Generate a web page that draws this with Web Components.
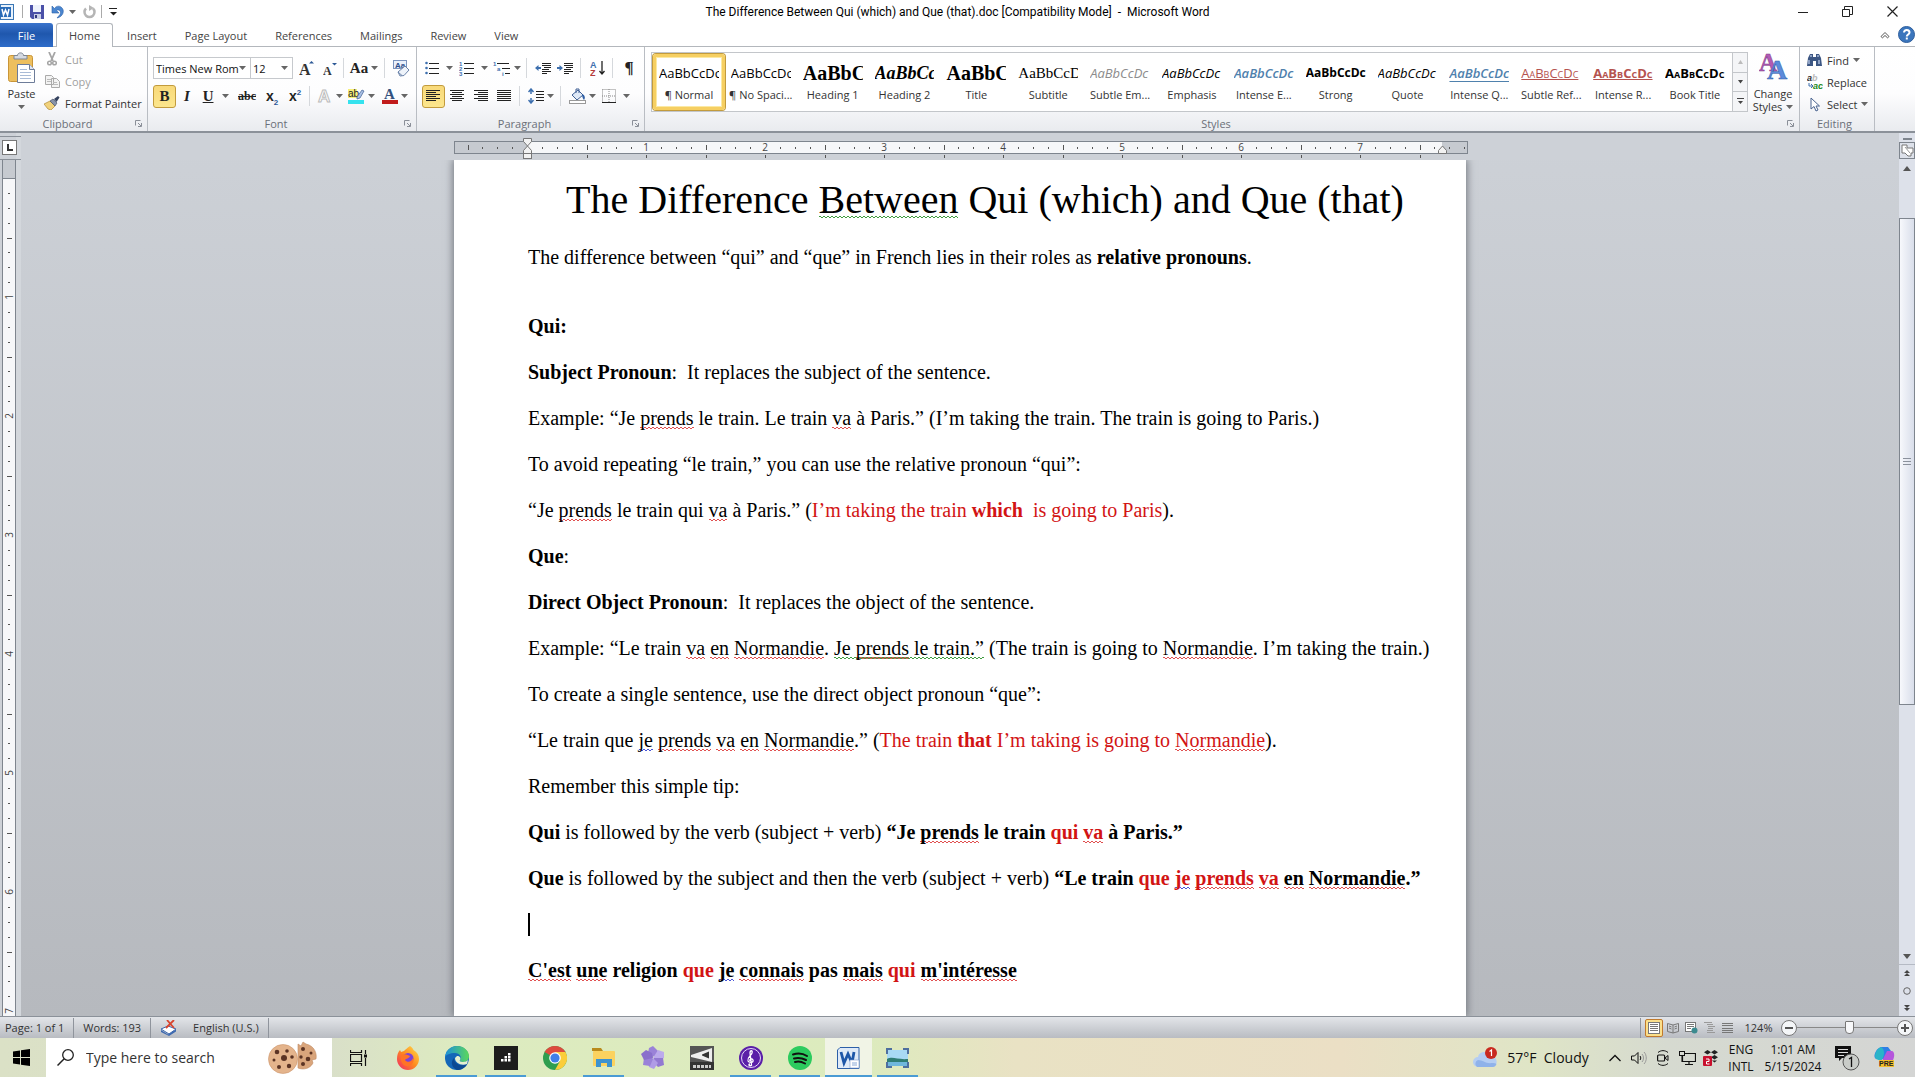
<!DOCTYPE html>
<html lang="en">
<head>
<meta charset="utf-8">
<title>The Difference Between Qui (which) and Que (that).doc - Microsoft Word</title>
<style>
html,body{margin:0;height:100%}
body{font-family:"Open Sans","Noto Sans",sans-serif;font-size:11px;color:#333;overflow:hidden}
</style>
</head>
<body>
<word-app></word-app>
<script>
const BASE = `
*{box-sizing:border-box}
button,select,input{font:inherit;color:inherit;border:0;background:none;padding:0;margin:0}
button{display:flex;align-items:center;justify-content:center;gap:3px;white-space:nowrap}
svg{display:block;flex:none}
`;
function define(name, css, html) {
  customElements.define(name, class extends HTMLElement {
    constructor() {
      super();
      this.attachShadow({mode: 'open'});
    }
    connectedCallback() {
      const t = document.createElement('template');
      t.innerHTML = `<style>${BASE}${css}</style>` + (typeof html === 'function' ? html(this) : html);
      this.shadowRoot.replaceChildren(t.content.cloneNode(true));
    }
  });
}
const svg = (w, h, body, vb) => `<svg width="${w}" height="${h}" viewBox="${vb || `0 0 ${w} ${h}`}" aria-hidden="true">${body}</svg>`;
const ARROW = svg(7, 4, '<path d="M0 0h7L3.500 4z" fill="#666"/>');
const lines = (list, x = 0, c = '#222') => list.map(([a, b, y]) => `<path d="M${a + x} ${y}.5H${b + x}" stroke="${c}"/>`).join('');

const I = {
  word: svg(15, 16, '<rect x=".5" y=".5" width="13" height="15" fill="#e9f2fb" stroke="#3b77b5"/><rect x="0" y="3" width="11" height="10" fill="#2a6cb8"/><path d="M2 5l1.500 6L5.500 6l2 5L9 5" fill="none" stroke="#fff" stroke-width="1.500"/>'),
  save: svg(14, 14, '<path d="M0 0h14v14H2L0 12z" fill="#4b51a8"/><rect x="3" y="0" width="8" height="7" fill="#eef2fb"/><rect x="4" y="9" width="7" height="5" fill="#c9cfe6"/><rect x="5" y="10" width="2" height="3" fill="#33387f"/>'),
  undo: svg(13, 14, '<path d="M1 1v7h7L5.500 5.500C8 4 10.500 6 9 9.500L6 13c6-1 8.500-8 4-11C8 .5 5 1 3.500 3.500z" fill="#4a86d0" stroke="#2e62a8" stroke-width=".6"/>'),
  redo: svg(13, 14, '<path d="M3 3.500a5 5 0 1 0 7 0" fill="none" stroke="#b5b5b5" stroke-width="2.500"/><path d="M6 0v6l5-3z" fill="#b5b5b5"/>'),
  custom: svg(8, 8, '<path d="M0 .5h8" stroke="#222"/><path d="M1 4h7L4.500 7.500z" fill="#222"/>'),
  min: svg(10, 10, '<path d="M0 5.500h10" stroke="#222"/>'),
  restore: svg(11, 11, '<path d="M.5 3.500h7v7h-7zM2.500 3.500v-3h8v8h-3" fill="none" stroke="#222"/>'),
  close: svg(11, 11, '<path d="M.5.5l10 10M10.500.5l-10 10" stroke="#222" stroke-width="1.200"/>'),
  collapse: svg(10, 8, '<path d="M1 5.500L5 1.500l4 4-1.500 1.300L5 4.500 2.500 6.800z" fill="#fff" stroke="#555"/>'),
  help: svg(17, 17, '<circle cx="8.500" cy="8.500" r="8" fill="#3b76bd" stroke="#2f5f9d"/><path d="M6 6.500c0-3.500 5.500-3 5.500 0 0 2-2.700 2-2.700 4" fill="none" stroke="#fff" stroke-width="2"/><rect x="7.800" y="11.500" width="2" height="2" fill="#fff"/>'),
  paste: svg(27, 31, '<rect x=".5" y="3.500" width="24" height="26" rx="2" fill="#edbf5e" stroke="#c99538"/><path d="M6 7V3.500h3.500C9.500 0 15.500 0 15.500 3.500H19V7z" fill="#d5dae2" stroke="#7d8694"/><path d="M9.500 12.500h12l5 5v13h-17z" fill="#fff" stroke="#6d7c99"/><path d="M21.500 12.500v5h5" fill="#dfe6f3" stroke="#6d7c99"/><path d="M12 17.500h7M12 20.500h11M12 23.500h11M12 26.500h11" stroke="#a9bbd6"/>'),
  cut: svg(10, 14, '<path d="M2 0l4 9M8 0L4 9" stroke="#a5a5a5" stroke-width="1.800" fill="none"/><circle cx="2.500" cy="11" r="1.800" fill="none" stroke="#a5a5a5" stroke-width="1.500"/><circle cx="7.500" cy="11" r="1.800" fill="none" stroke="#a5a5a5" stroke-width="1.500"/>'),
  copy: svg(15, 13, '<path d="M.5.5h6l2 2v7h-8zM6.500 3.500h5l3 3v6h-8z" fill="#f3f3f3" stroke="#aaa"/><path d="M2 4.500h4M2 6.500h4M8 7.500h4M8 9.500h5" stroke="#bbb"/>'),
  painter: svg(16, 14, '<path d="M0 8l6-3 5 5-4 4-3-1z" fill="#f1d27c" stroke="#b08a35" stroke-width=".7"/><path d="M6 5l3-2 4 4-2 3z" fill="#8793a8" stroke="#4c5568" stroke-width=".7"/><path d="M10 3l4-3 1.500 1.500L12.500 6z" fill="#33415e"/>'),
  launcher: svg(7, 7, '<path d="M.5 5.500v-5h5" fill="none" stroke="#8a8f98"/><path d="M3 3l3 3M6.500 3v3.500H3" stroke="#8a8f98" fill="none"/>'),
  grow: svg(15, 17, '<text x="0" y="15" font-family="Liberation Serif" font-weight="700" font-size="16" fill="#333">A</text><path d="M10 3.500h5L12.500 1z" fill="#2c5896"/>'),
  shrink: svg(14, 17, '<text x="0" y="15" font-family="Liberation Serif" font-weight="700" font-size="12" fill="#333">A</text><path d="M9 3h5l-2.500 2.500z" fill="#2c5896"/>'),
  clear: svg(17, 17, '<rect x=".5" y=".5" width="13" height="8" fill="#eaf1fb" stroke="#7b93bd"/><text x="2" y="8" font-size="8" font-weight="700" font-family="Liberation Sans" fill="#2b4f8c">Aa</text><path d="M5 12l7-6 4 4-5 5.500-4 .5z" fill="#eef3fa" stroke="#6b83aa"/><path d="M5 12l4 3.500" stroke="#6b83aa"/>'),
  glow: svg(16, 16, '<text x="1" y="14" font-family="Liberation Sans" font-weight="700" font-size="17" fill="#fff" stroke="#bbb">A</text>'),
  hl: svg(18, 17, '<rect x="1" y="1" width="9" height="9" fill="#f6f07a"/><text x="1" y="9" font-size="10" font-family="Liberation Sans" fill="#222">ab</text><path d="M10 9l5-7 2 1-4 7-3 1z" fill="#a8bfe3" stroke="#3f5f94" stroke-width=".7"/><rect x="1" y="12" width="16" height="4" fill="#35e2ee"/>'),
  color: svg(16, 17, '<text x="2" y="11" font-size="15" font-weight="700" font-family="Liberation Serif" fill="#32527f">A</text><rect x="0" y="12" width="16" height="4" fill="#c11b1b"/>'),
  bullets: svg(14, 14, '<g fill="#3d6fae"><circle cx="1.500" cy="2" r="1.300"/><circle cx="1.500" cy="7" r="1.300"/><circle cx="1.500" cy="12" r="1.300"/></g>' + lines([[4, 14, 2], [4, 14, 7], [4, 14, 12]])),
  numbers: svg(15, 15, '<g fill="#3d6fae" font-size="6" font-weight="700" font-family="Liberation Sans"><text x="0" y="5">1</text><text x="0" y="10">2</text><text x="0" y="15">3</text></g>' + lines([[5, 15, 2], [5, 15, 7], [5, 15, 12]])),
  multi: svg(18, 15, '<g fill="#3d6fae" font-size="6" font-weight="700" font-family="Liberation Sans"><text x="0" y="5">1</text><text x="4" y="10">a</text><text x="9" y="15">i</text></g>' + lines([[4, 16, 2], [9, 17, 7], [12, 17, 12]])),
  dedent: svg(16, 13, lines([[7, 16, 1], [7, 16, 3], [9, 16, 5], [7, 14, 7], [7, 16, 9], [7, 12, 11]]) + '<path d="M0 6l3.500-3v2H6v2H3.500v2z" fill="#3d6fae"/>'),
  indent: svg(16, 13, lines([[7, 16, 1], [7, 16, 3], [9, 16, 5], [7, 14, 7], [7, 16, 9], [7, 12, 11]]) + '<path d="M6 6L2.500 3v2H0v2h2.500v2z" fill="#3d6fae"/>'),
  sort: svg(15, 16, '<text x="0" y="7.500" font-size="9" font-weight="700" font-family="Liberation Sans" fill="#3d6fae">A</text><text x="0" y="15.500" font-size="9" font-weight="700" font-family="Liberation Sans" fill="#b53a3a">Z</text><path d="M12 1v13M9.500 11l2.500 3 2.500-3" fill="none" stroke="#222" stroke-width="1.300"/>'),
  left: svg(15, 12, lines([[0, 14, 0], [0, 10, 2], [0, 14, 4], [0, 10, 6], [0, 14, 8], [0, 10, 10]])),
  center: svg(15, 12, lines([[0, 14, 0], [2, 12, 2], [0, 14, 4], [2, 12, 6], [0, 14, 8], [2, 12, 10]])),
  right: svg(15, 12, lines([[0, 14, 0], [4, 14, 2], [0, 14, 4], [4, 14, 6], [0, 14, 8], [4, 14, 10]])),
  just: svg(15, 12, lines([[0, 14, 0], [0, 14, 2], [0, 14, 4], [0, 14, 6], [0, 14, 8], [0, 14, 10]])),
  spacing: svg(16, 16, '<path d="M3 1v5M3 10v5M.5 4L3 1l2.500 3M.5 12L3 15l2.500-3" fill="none" stroke="#3d6fae" stroke-width="1.500"/>' + lines([[8, 16, 3], [8, 16, 6], [8, 16, 9], [8, 16, 12]])),
  shade: svg(17, 16, '<path d="M3 7l6-5 5 5-6 5z" fill="#dfe9f7" stroke="#3f5f94"/><path d="M7 5V1h3v4" fill="none" stroke="#3f5f94"/><path d="M13 6c3 1 3.500 4 2 6-1-1-2-3-2-6z" fill="#2e5ea5"/><rect x=".5" y="12.500" width="16" height="3" fill="#fff" stroke="#999"/>'),
  borders: svg(14, 14, '<path d="M.5.5h13v13M.5.5v13M7 0v14M0 7h14" fill="none" stroke="#888" stroke-dasharray="1 1"/><path d="M0 13.500h14" stroke="#222"/>'),
  styles: svg(29, 28, '<text x="0" y="19" font-family="Liberation Serif" font-weight="700" font-size="25" fill="#b25ab4" stroke="#7d3a86" stroke-width=".5">A</text><text x="8" y="27" font-family="Liberation Serif" font-weight="700" font-size="28" fill="#5b8bdc" stroke="#2f5aa6" stroke-width=".5">A</text>'),
  find: svg(15, 14, '<path d="M1 5l2-4h3v3h3V1h3l2 4 1 8H9V8H6v5H0z" fill="#3c5683"/><path d="M2 7v4M12 7v4M4 2v2M11 2v2" stroke="#b7c8e6" stroke-width="1.300"/>'),
  replace: svg(16, 16, '<g font-family="Liberation Sans" font-weight="700" font-size="9"><text x="0" y="7" fill="#333">a</text><text x="5" y="7" fill="#bbb">b</text><text x="6" y="15" fill="#238b23">ac</text></g><path d="M2 9v3h4M4 10l2 2-2 2" fill="none" stroke="#3d6fae"/>'),
  select: svg(10, 15, '<path d="M1 1v11l3-2.500L6 14l2-1-2-4h3.500z" fill="#fff" stroke="#4a6490"/>'),
  proof: svg(17, 16, '<path d="M1 9l7-3 8 3-7 5z" fill="#fff" stroke="#3c69b0"/><path d="M1 10l7 4.500 8-5v2L9 16l-8-4z" fill="#3c69b0"/><path d="M7 0l7 8M14 0L6 8" stroke="#d8442e" stroke-width="1.800"/>'),
  v1: svg(12, 12, '<rect x=".5" y=".5" width="11" height="11" fill="#fff" stroke="#777"/>' + lines([[2, 10, 2], [2, 10, 4], [2, 10, 6], [2, 10, 8]], 0, '#777')),
  v2: svg(12, 12, '<path d="M.5 1.500L6 3l5.500-1.500v8L6 11 .5 9.500zM6 3v8M2 4l2.500 1M2 6l2.500 1M10 4L7.500 5M10 6L7.500 7" fill="none" stroke="#777"/>'),
  v3: svg(13, 12, '<rect x=".5" y=".5" width="10" height="9" fill="#fff" stroke="#777"/>' + lines([[2, 9, 2], [2, 9, 4], [2, 6, 6]], 0, '#777') + '<circle cx="9.500" cy="8.500" r="3" fill="#3c8a8f"/>'),
  v4: svg(11, 12, lines([[0, 8, 0], [3, 9, 2], [4, 11, 4], [4, 9, 6], [3, 9, 8], [3, 11, 10]], 0, '#999')),
  v5: svg(11, 12, lines([[0, 11, 1], [0, 11, 3], [0, 11, 6], [0, 11, 8], [0, 11, 10]], 0, '#777')),
  minus: svg(16, 16, '<circle cx="8" cy="8" r="7.500" fill="#f4f6f8" stroke="#777"/><path d="M4 8h8" stroke="#555" stroke-width="2"/>'),
  plus: svg(16, 16, '<circle cx="8" cy="8" r="7.500" fill="#f4f6f8" stroke="#777"/><path d="M4 8h8M8 4v8" stroke="#555" stroke-width="2"/>'),
  win: svg(17, 17, '<path d="M0 2.500l7-1V8H0zM8 1.300L17 0v8H8zM0 9h7v6.500l-7-1zM8 9h9v8l-9-1.300z" fill="#000"/>'),
  search: svg(17, 17, '<circle cx="11" cy="6" r="5.300" fill="none" stroke="#222" stroke-width="1.300"/><path d="M7.200 9.800L.5 16.500" stroke="#222" stroke-width="1.500"/>'),
  cookie: svg(50, 33, '<path d="M30 3l3 2 2-4 3 2c9 2 11 10 10 15l-4 1 1 3c-3 6-10 7-15 5z" fill="#d9a57c" stroke="#c18a61" stroke-width=".6"/><circle cx="15" cy="18" r="14.500" fill="#e4b48c" stroke="#cc966c" stroke-width=".6"/><g fill="#5b3324"><circle cx="9" cy="11" r="2.300"/><circle cx="19" cy="10" r="1.800"/><circle cx="16" cy="17" r="3"/><circle cx="24" cy="16" r="1.800"/><circle cx="6" cy="19" r="1.500"/><circle cx="11" cy="26" r="2"/><circle cx="21" cy="25" r="2.200"/><circle cx="35" cy="8" r="2"/><circle cx="33" cy="16" r="1.700"/><circle cx="40" cy="18" r="2.300"/><circle cx="43" cy="12" r="1.500"/><circle cx="35" cy="23" r="2"/></g>'),
  taskview: svg(18, 16, '<path d="M.5 0v2.500h11V0M.5 16v-2.500h11V16M.5 4.500h11v7H.5zM15.500 0v4M15.500 8v8" fill="none" stroke="#111" stroke-width="1.200"/><rect x="14" y="4.500" width="3" height="3" fill="#111"/>'),
  firefox: svg(24, 24, '<defs><linearGradient id="f" x1="1" y1="0" x2="0" y2="1"><stop offset="0" stop-color="#ffe14d"/><stop offset=".5" stop-color="#ff8a1f"/><stop offset="1" stop-color="#f0246c"/></linearGradient></defs><path d="M14 0c2 1 3 3 3.500 4C21 6 23 9 23 13a11 11 0 0 1-22 0c0-4 1-7 3-9l1 2 3-1c1-1 3-3 6-5z" fill="url(#f)"/><circle cx="12" cy="12.500" r="5.500" fill="#7d42d8"/><path d="M5 9c4-2 7 0 9 1-1 3-4 2-5 4 2 3 7 2 8-2 2 5-3 9-7 8-4-1-6-6-5-11z" fill="#ff7426"/>'),
  edge: svg(24, 24, '<defs><linearGradient id="e" x1="0" y1="0" x2="1" y2="0"><stop offset="0" stop-color="#1b8fdc"/><stop offset="1" stop-color="#5cd85a"/></linearGradient></defs><circle cx="12" cy="12" r="12" fill="#1467b8"/><path d="M0 11C1 4 6 0 12 0c7 0 12 5 12 10 0 4-3 6-6 6-2 0-4-1-3-2 2-3 0-7-5-7C5 7 1 9 0 11z" fill="url(#e)"/><path d="M9 12c0 5 5 8 10 7l3-1c-2 4-6 6-10 6-5-2-7-8-3-12z" fill="#0c4a93"/><path d="M12 10c3 0 4 2 3 4-1 1 1 2 3 2 2 0 4-1 5-2l-1 4c-6 2-12-1-12-6z" fill="#e5efd0"/>'),
  dark: svg(24, 24, '<rect width="24" height="24" fill="#1d1d1d"/><g fill="#fff"><rect x="7" y="13" width="2.500" height="2.500"/><rect x="10.500" y="13" width="2.500" height="2.500"/><rect x="14" y="13" width="2.500" height="2.500"/><rect x="10.500" y="10" width="2.500" height="2.500"/><rect x="14" y="10" width="2.500" height="2.500"/><rect x="14" y="7" width="2.500" height="2.500"/></g>'),
  chrome: svg(24, 24, '<circle cx="12" cy="12" r="12" fill="#2f9e4f"/><path d="M12 12L1.600 6A12 12 0 0 1 22.400 6z" fill="#dd4b3e"/><path d="M12 6h10.400A12 12 0 0 1 12 24l5-9z" fill="#fbcd3a"/><circle cx="12" cy="12" r="5.800" fill="#fff"/><circle cx="12" cy="12" r="4.600" fill="#3f7fe8"/>'),
  folder: svg(24, 20, '<path d="M0 0h9l2 3H0z" fill="#b98a1c"/><rect x="1" y="3" width="22" height="15" rx="1" fill="#fbd25f"/><path d="M4 19v-8h16v8h-5v-4h-6v4z" fill="#3d93cf"/>'),
  flower: svg(24, 24, '<g fill="#a993e2"><path d="M12 0l5 5-1 4-5 2-4-4 1-5z" fill="#9a82d8"/><path d="M17 4l6 2v6l-5 3-6-3z" fill="#bcaaec"/><path d="M22 12l1 7-6 2-5-5 1-4z" fill="#9279d2"/><path d="M17 17l-4 6-5-2-1-6 5-3z" fill="#b09ce6"/><path d="M9 20l-7-1 1-7 5-2 4 3z" fill="#9a82d8"/><path d="M3 14L0 8l5-4 6 3 1 5z" fill="#8a70cc"/></g>'),
  amp: svg(24, 24, '<rect width="24" height="24" fill="#555"/><rect y="16" width="24" height="8" fill="#333"/><path d="M1 9L22 2v14L1 11z" fill="#ededed"/><path d="M12 8.500l7-3v7l-7-3z" fill="#333"/><path d="M3 20.500h18" stroke="#ccc" stroke-width="3" stroke-dasharray="3 1"/>'),
  music: svg(24, 24, '<circle cx="12" cy="12" r="12" fill="#5a1fa8"/><circle cx="12" cy="12" r="9.500" fill="none" stroke="#e6d8fa"/><path d="M13 19c-3 2-4-1-2-1M12.500 19L11 7c0-3 3-3 2 0s-5 4-4 8c1 2 6 2 5-1-1-2-4-1-3 1" fill="none" stroke="#fff" stroke-width="1.300"/>'),
  spotify: svg(24, 24, '<circle cx="12" cy="12" r="12" fill="#2ccb5e"/><path d="M5 8.500c5-1.500 10-1 14 1.500M6 12.500c4-1 8-.5 12 1.500M7 16c3-1 6.500-.5 10 1.500" fill="none" stroke="#111" stroke-width="2" stroke-linecap="round"/>'),
  wordapp: svg(23, 22, '<path d="M3 .5h19v21H.5V3z" fill="#dfeaf8" stroke="#2d5fa8"/><path d="M4 5l3 11 4-9 4 9 2-11" fill="none" stroke="#1d56a8" stroke-width="2.800"/><path d="M13 13h9v8h-9z" fill="#fff" stroke="#7d9ccc" stroke-width=".6"/><path d="M15 16h5M15 18h5" stroke="#8aa9d6"/>'),
  photo: svg(23, 20, '<rect x="1" y="2" width="21" height="16" fill="#a8d9f4"/><path d="M1 11c6-3 10 1 21 0v7H1z" fill="#2f7d74"/><path d="M1 14h21v4H1z" fill="#6fb7dc"/><path d="M1 6V1h5M17 1h5v5M22 14v5h-5M6 19H1v-5" fill="none" stroke="#4e6f9f" stroke-width="2"/>'),
  cloud: svg(25, 22, '<path d="M5 20a5 5 0 0 1 0-10c1-6 10-7 12-1 8 0 9 10 2 11z" fill="#b4cdf3"/><path d="M4 20a4 4 0 0 1 1-7c5 0 8 4 14 3 4 0 5 1 4 2-1 2-3 2-4 2z" fill="#8fb2ea"/><circle cx="18" cy="6" r="6" fill="#c92a20"/><path d="M16.500 4.500L18.500 3v6" stroke="#fff" fill="none" stroke-width="1.200"/>'),
  chev: svg(12, 8, '<path d="M.5 7L6 1.500 11.500 7" fill="none" stroke="#111" stroke-width="1.300"/>'),
  speaker: svg(16, 14, '<path d="M.5 5h3L7 1.500v11L3.500 9h-3z" fill="none" stroke="#111"/><path d="M9 5c1 1 1 3 0 4" fill="none" stroke="#111"/><path d="M11 3c2 2 2 6 0 8M13 1c3 3 3 9 0 12" fill="none" stroke="#999"/>'),
  meet: svg(12, 16, '<path d="M1 2.500C4 0 8 0 11 2.500M1 13.500c3 2.500 7 2.500 10 0" fill="none" stroke="#111"/><rect x=".6" y="5" width="7" height="6" rx="1" fill="none" stroke="#111" stroke-width="1.200"/><path d="M8 8l3-2.500v5z" fill="none" stroke="#111"/>'),
  net: svg(17, 14, '<path d="M3.500 2.500h13v8h-13zM6 13.500h8M10 10.500v3" fill="none" stroke="#111" stroke-width="1.200"/><rect x=".5" y=".5" width="5" height="4" fill="#d9dcd4" stroke="#111"/><path d="M3 5v6" stroke="#111"/>'),
  dropbox: svg(16, 16, '<path d="M4.500 0L8 2.300 4.500 4.600 1 2.300zM11.500 0L15 2.300l-3.500 2.300L8 2.300zM11.500 4.900L15 7.200l-3.500 2.300L8 7.200zM9 10.500h5l-2.500 2z" fill="#222"/><rect x="0" y="6" width="9" height="10" rx="1" fill="#c8102e"/><path d="M3 9h3v2.500H3.500V14H6.500" fill="none" stroke="#fff"/>'),
  notif: svg(26, 27, '<path d="M0 2h16v12H7l-3 3v-3H0z" fill="#111"/><path d="M3 5.500h10M3 8.500h10M3 11.500h6" stroke="#ddd"/><circle cx="16" cy="18" r="8" fill="#c9ccc8" stroke="#555"/><path d="M14 15l2.500-1.500V23" fill="none" stroke="#111" stroke-width="1.300"/>'),
  copilot: svg(21, 22, '<path d="M7 0h7l3 4-4 8H3C-2 12 1 2 7 0z" fill="#2f7fe6"/><path d="M7 0c4 2 4 9 0 14l-5-2C-1 9 3 1 7 0z" fill="#2bb4c8"/><path d="M13 4h5c4 1 2 11-2 12H7l4-8z" fill="#b556dc"/><rect x="5" y="13" width="15" height="7" fill="#f5bd2d"/><text x="5" y="19" font-size="7" font-weight="700" font-family="Liberation Sans" fill="#222">PRE</text>'),
};

define('title-bar', `
:host{display:flex;height:23px;align-items:center;background:#fff;color:#000;font:12px Roboto,sans-serif}
.quick{display:flex;align-items:center;flex:1;gap:7px}
.quick button{gap:5px}
.sep{width:1px;height:13px;background:#aaa;margin-left:-2px}
.title{white-space:pre}
.win{flex:1;display:flex;justify-content:flex-end}
.win button{width:45px;height:23px}
`, `<div class="quick">${I.word}<i class="sep" style="margin:0"></i><button aria-label="Save">${I.save}</button><button aria-label="Undo">${I.undo}${ARROW}</button><button aria-label="Redo">${I.redo}</button><i class="sep"></i>${I.custom}</div>
<div class="title">The Difference Between Qui (which) and Que (that).doc [Compatibility Mode]  -  Microsoft Word</div>
<div class="win"><button aria-label="Minimize">${I.min}</button><button aria-label="Restore">${I.restore}</button><button aria-label="Close">${I.close}</button></div>`);

define('ribbon-tabs', `
:host{display:flex;height:24px;background:#fff;border-bottom:1px solid #b3b7bc;color:#444}
button{padding:0 14px;height:24px}
.file{width:53px;margin-right:3px;background:linear-gradient(#3a74cc,#1f57ad 45%,#2e6cc9);color:#fff;border-radius:0 3px 0 0}
.on{border:1px solid #b3b7bc;border-bottom:0;background:#fff;border-radius:3px 3px 0 0;padding:0 12px}
.end{margin-left:auto;display:flex;align-items:center;gap:8px}
.end button{padding:0}
`, `<button class="file">File</button><button class="on">Home</button><button>Insert</button><button>Page Layout</button><button>References</button><button>Mailings</button><button>Review</button><button>View</button>
<div class="end"><button aria-label="Minimize the Ribbon">${I.collapse}</button><button aria-label="Help">${I.help}</button></div>`);

define('ribbon-group', `
:host{display:flex;flex-direction:column;border-right:1px solid #b9bdc3;box-sizing:border-box;flex:none;min-width:0}
.body{flex:1;min-height:0;min-width:0}
footer{height:15px;display:flex;align-items:center;color:#6b7079;padding-right:5px}
span{flex:1;text-align:center}
`, el => `<div class="body"><slot></slot></div><footer><span>${el.getAttribute('label')}</span>${el.hasAttribute('launcher') ? I.launcher : ''}</footer>`);

define('clipboard-tools', `
:host{display:flex;padding-top:1px}
.paste{width:43px;flex-direction:column;gap:2px;justify-content:flex-start;padding-top:4px}
.paste span{line-height:18px}
.col{display:flex;flex-direction:column}
.col button{height:22px;justify-content:flex-start;gap:4px}
.col i{width:18px;display:flex;justify-content:center}
.off{color:#a0a0a0}
`, `<button class="paste">${I.paste}<span>Paste</span>${ARROW}</button>
<div class="col"><button class="off"><i>${I.cut}</i>Cut</button><button class="off"><i>${I.copy}</i>Copy</button><button><i>${I.painter}</i>Format Painter</button></div>`);

const ROW = `
:host{display:block;padding:8px 5px 0}
.r{display:flex;align-items:center;height:26px}
.r+.r{margin-top:2px}
.r>*{flex:none}
.r>button{height:23px}
.sep{width:1px;height:20px;background:#d5d8dc}
.on{border:1px solid #c29b3d;border-radius:3px;background:linear-gradient(#f8d97a,#fce68d)}
`;
const b = (w, label, body, arrow, cls) => `<button style="width:${w}px" aria-label="${label}" class="${cls || ''}">${body}${arrow ? ARROW : ''}</button>`;
const sep = (l, r) => `<i class="sep" style="margin:0 ${r}px 0 ${l}px"></i>`;

define('font-tools', ROW + `
.combo{display:grid;align-items:center;justify-items:end;border:1px solid #c6c9cd;height:22px;background:#fff;color:#111}
.combo>*{grid-area:1/1}
.combo select{width:100%;height:20px;padding-left:2px;appearance:none}
.combo svg{margin-right:4px;pointer-events:none}
.combo+.combo{border-left:0}
.s{font:700 15px "Liberation Serif",serif;color:#222}
.x{font:700 14px "Liberation Sans",sans-serif;color:#222}
i.s{font-style:italic}
sub,sup{font-size:8px;color:#2c5896;line-height:0}
`, `<div class="r"><label class="combo" style="width:98px"><select aria-label="Font"><option>Times New Rom</option></select>${ARROW}</label><label class="combo" style="width:42px"><select aria-label="Font size"><option>12</option></select>${ARROW}</label>
${b(26, 'Grow font', I.grow)}${b(22, 'Shrink font', I.shrink)}${sep(2, 6)}${b(28, 'Change case', '<span class="s">Aa</span>', 1)}${sep(6, 6)}${b(20, 'Clear formatting', I.clear)}</div>
<div class="r">${b(23, 'Bold', '<span class="s">B</span>', 0, 'on')}${b(22, 'Italic', '<i class="s">I</i>')}${b(36, 'Underline', '<u class="s">U</u>&nbsp;', 1)}${b(26, 'Strikethrough', '<s class="s" style="font-size:12px">abc</s>')}${b(24, 'Subscript', '<span class="x">x<sub>2</sub></span>')}${b(22, 'Superscript', '<span class="x">x<sup>2</sup></span>')}${sep(3, 6)}${b(28, 'Text effects', I.glow, 1)}${b(34, 'Highlight', I.hl, 1)}${b(34, 'Font colour', I.color, 1)}</div>`);

define('para-tools', ROW + `.p{font:700 17px "Liberation Serif",serif;color:#222}.wide{gap:7px}`,
`<div class="r">${b(34, 'Bullets', I.bullets, 1, 'wide')}${b(35, 'Numbering', I.numbers, 1, 'wide')}${b(32, 'Multilevel list', I.multi, 1)}${sep(3, 7)}${b(18, 'Decrease indent', I.dedent)}${b(26, 'Increase indent', I.indent)}${sep(2, 6)}${b(20, 'Sort', I.sort)}${sep(5, 5)}${b(22, 'Show marks', '<span class="p">¶</span>')}</div>
<div class="r">${b(23, 'Align left', I.left, 0, 'on')}${b(24, 'Center', I.center)}${b(24, 'Align right', I.right)}${b(23, 'Justify', I.just)}${sep(3, 6)}${b(30, 'Line spacing', I.spacing, 1)}${sep(4, 6)}${b(31, 'Shading', I.shade, 1)}${b(35, 'Borders', I.borders, 1, 'wide')}</div>`);

define('style-card', `
:host{display:block;flex:0 1 72px;min-width:0;height:57px}
button{width:100%;height:56px;display:flex;flex-direction:column;align-items:stretch;justify-content:flex-start;gap:1px;padding:5px 3px 0;border:3px solid transparent}
:host([selected]) button{border-color:#f6cf62;border-radius:3px;box-shadow:inset 0 0 0 1px #fbe9a4,0 0 0 1px #c29b3d}
.pv{overflow:hidden;white-space:nowrap;line-height:22px;height:24px;color:#000;text-align:left}
.nm{line-height:16px;color:#333;margin:0 -4px}
`, el => `<button><span class="pv" style="${el.getAttribute('look')}">${el.getAttribute('sample') || 'AaBbCcDc'}</span><span class="nm">${el.getAttribute('name')}</span></button>`);

const UI = 'font-size:13px;', SERIF = 'font-family:Liberation Serif,serif;font-weight:700;font-size:20px;';
const STYLES = [['¶ Normal', UI], ['¶ No Spaci...', UI], ['Heading 1', SERIF, 'AaBbC'], ['Heading 2', SERIF + 'font-size:18px;font-style:italic', 'AaBbCc'], ['Title', SERIF, 'AaBbC'], ['Subtitle', 'font-family:Liberation Serif,serif;font-size:15px', 'AaBbCcD'],
  ['Subtle Em...', UI + 'font-style:italic;color:#8c8c8c'], ['Emphasis', UI + 'font-style:italic'], ['Intense E...', UI + 'font-style:italic;font-weight:600;color:#4f81ad'], ['Strong', 'font-size:12px;font-weight:700'], ['Quote', UI + 'font-style:italic'],
  ['Intense Q...', UI + 'font-style:italic;font-weight:600;color:#4f81ad;text-decoration:underline;text-underline-offset:3px'], ['Subtle Ref...', UI + 'font-variant:small-caps;color:#b5534f;text-decoration:underline'], ['Intense R...', UI + 'font-variant:small-caps;font-weight:700;color:#b5534f;text-decoration:underline'], ['Book Title', UI + 'font-variant:small-caps;font-weight:700']];

define('style-gallery', `
:host{display:flex;padding:5px 1px 0 6px;min-width:0}
.g{flex:1;display:flex;height:60px;border:1px solid #c3c6ca;background:#fff;min-width:0}
.c{flex:1;display:flex;overflow:hidden;padding:1px;min-width:0}
.s{display:flex;flex-direction:column;width:15px;border-left:1px solid #c3c6ca}
.s button{flex:1;background:#f4f5f7}
.s button+button{border-top:1px solid #c3c6ca}
.ch{width:50px;flex-direction:column;gap:0;justify-content:flex-start;line-height:13px}
.ch svg{margin-bottom:7px}
.ch span{display:flex;align-items:center;gap:4px}
.ch span svg{margin:0}
`, `<div class="g"><div class="c">${STYLES.map(([n, l, s], i) => `<style-card name="${n}" look="${l}"${s ? ` sample="${s}"` : ''}${i ? '' : ' selected'}></style-card>`).join('')}</div>
<div class="s"><button aria-label="Up">${svg(5, 4, '<path d="M0 4h5L2.500 0z" fill="#bbb"/>')}</button><button aria-label="Down">${svg(5, 4, '<path d="M0 0h5L2.500 3.500z" fill="#444"/>')}</button><button aria-label="More">${svg(7, 7, '<path d="M0 .5h7" stroke="#444"/><path d="M1 3h5L3.500 6z" fill="#444"/>')}</button></div></div>
<button class="ch">${I.styles}<b style="font-weight:400">Change</b><span>Styles ${ARROW}</span></button>`);

define('edit-tools', `
:host{display:flex;flex-direction:column;padding:2px 0 0 6px}
button{height:22px;justify-content:flex-start;gap:4px}
i{width:17px;display:flex;justify-content:center}
`, `<button><i>${I.find}</i>Find ${ARROW}</button><button><i>${I.replace}</i>Replace</button><button><i>${I.select}</i>Select ${ARROW}</button>`);

define('word-ribbon', `
:host{display:flex;height:86px;background:linear-gradient(#fff,#fdfdfe 55%,#e9ebef);border-bottom:2px solid #8b9199;box-sizing:border-box}
`, `<ribbon-group label="Clipboard" launcher style="width:148px"><clipboard-tools></clipboard-tools></ribbon-group>
<ribbon-group label="Font" launcher style="width:269px"><font-tools></font-tools></ribbon-group>
<ribbon-group label="Paragraph" launcher style="width:228px"><para-tools></para-tools></ribbon-group>
<ribbon-group label="Styles" launcher style="flex:1"><style-gallery></style-gallery></ribbon-group>
<ribbon-group label="Editing" style="width:75px"><edit-tools></edit-tools></ribbon-group><div style="width:40px;flex:none"></div>`);

define('h-ruler', `
:host{display:block;width:1016px;height:27px;margin-right:-4px}
`, () => {
  let s = '<rect x=".5" y="8.500" width="1013" height="12" fill="#c6cad0" stroke="#7e858e"/><rect x="74" y="9" width="914" height="11" fill="#f6f7f9"/>';
  for (let k = -5; k <= 63; k++) {
    const x = Math.round(73 + k * 119 / 8);
    if (k === 0) continue;
    if (k % 8 === 0) s += `<text x="${x}" y="18" font-size="10" text-anchor="middle" fill="#444">${k / 8}</text>`;
    else if (k % 4 === 0) s += `<path d="M${x}.5 12v5" stroke="#555"/>`;
    else s += `<path d="M${x}.5 14v2" stroke="#555"/>`;
    if (k > 0 && k % 4 === 0) s += `<path d="M${x}.5 22v3" stroke="#555"/>`;
  }
  s += '<path d="M69.500 5.500h8v3l-4 4.500-4-4.500zM73.500 13l4 4.500v3h-8v-3z" fill="#f2f2f2" stroke="#777"/><rect x="69.500" y="20.500" width="8" height="5" fill="#f2f2f2" stroke="#777"/><path d="M988.500 13l4 4.500v3h-8v-3z" fill="#f2f2f2" stroke="#777"/>';
  return svg(1016, 27, s);
});

define('v-ruler', `
:host{display:block;overflow:hidden;background:linear-gradient(90deg,#cdd1d7 16px,#d3d7dc 16px);min-height:0}
.tab{width:22px;height:24px;border:1px solid #8b9199;border-left:0;margin-top:3px;padding:3px 0 0 2px}
`, () => {
  let s = '<rect x="2.500" y="0" width="13" height="900" fill="#f6f7f9" stroke="#7e858e"/><rect x="3" y="0" width="12" height="18" fill="#c6cad0"/><path d="M2 18.500h14" stroke="#7e858e"/>';
  for (let k = 1; k < 58; k++) {
    const y = Math.round(18 + k * 119 / 8);
    if (k % 8 === 0) s += `<text transform="translate(13 ${y}) rotate(-90)" font-size="10" text-anchor="middle" fill="#444">${k / 8}</text>`;
    else if (k % 4 === 0) s += `<path d="M7 ${y}.5h5" stroke="#555"/>`;
    else s += `<path d="M8 ${y}.5h2" stroke="#555"/>`;
  }
  return `<div class="tab">${svg(15, 15, '<rect x=".5" y=".5" width="14" height="14" fill="#fff" stroke="#777"/><path d="M6 4v6h5" fill="none" stroke="#333" stroke-width="2"/>')}</div>${svg(18, 900, s)}`;
});

define('v-scroll', `
:host{display:flex;flex-direction:column;align-items:center;background:#dde1ea;padding-top:5px;overflow:hidden}
.split{width:9px;height:2px;background:#7e858e;margin-bottom:2px;flex:none}
button{width:16px;flex:none}
.tg{height:17px;border:1px solid #7e858e}
.up{height:18px}
.track{flex:1;width:16px;padding-top:41px;background:#dde1ea}
.thumb{width:16px;height:487px;border:1px solid #7e858e;background:linear-gradient(90deg,#f7f8fc,#d9deea);display:flex;align-items:center;justify-content:center}
.dn{height:16px;border-bottom:1px solid #b5bac4}
.nav{height:17px}
`, `<i class="split"></i><button class="tg" aria-label="View ruler">${svg(13, 13, '<path d="M1 1h5v3h6v5h-2v3H7L4 9H1z" fill="#fff" stroke="#777"/><path d="M4 3l5 6" stroke="#999"/>')}</button><button class="up" aria-label="Scroll up">${svg(8, 5, '<path d="M0 5h8L4 0z" fill="#555"/>')}</button>
<div class="track"><div class="thumb">${svg(8, 8, '<path d="M0 .5h8M0 3.500h8M0 6.500h8" stroke="#8b919c"/>')}</div></div>
<button class="dn" aria-label="Scroll down">${svg(8, 5, '<path d="M0 0h8L4 5z" fill="#555"/>')}</button>
<button class="nav" aria-label="Previous page">${svg(6, 7, '<path d="M0 3h6L3 0zM0 6h6L3 3z" fill="#444"/>')}</button><button class="nav" aria-label="Browse object">${svg(8, 8, '<circle cx="4" cy="4" r="3.300" fill="none" stroke="#666"/>')}</button><button class="nav" aria-label="Next page">${svg(6, 7, '<path d="M0 1h6L3 4zM0 4h6L3 7z" fill="#444"/>')}</button>`);

define('doc-page', `
:host{display:block;box-sizing:border-box;width:1012px;flex:1;background:#fff;color:#000;padding:17px 24px 0 74px;overflow:hidden;font:20px/23px "Liberation Serif","Times New Roman",serif;box-shadow:0 0 8px 1px #70757c}
h1{font-size:40px;line-height:46px;font-weight:400;text-align:center;--o:4px;margin:0}
p{margin:23px 0 0;white-space:pre-wrap;min-height:23px}
.sec{margin-top:46px}
.red{color:#d21414}
u{text-decoration:none;--c:#e05050;background:linear-gradient(90deg,var(--c) 50%,transparent 50%) 0 calc(100% - 1px - var(--o,0px))/4px 1px repeat-x,linear-gradient(90deg,transparent 50%,var(--c) 50%) 0 calc(100% - var(--o,0px))/4px 1px repeat-x}
.g{--c:#3f9c3f}.b{--c:#4a55d8}
.caret{display:block;width:2px;height:23px;background:#000}
`, `<h1>The Difference <u class="g">Between</u> Qui (which) and Que (that)</h1>
<p>The difference between “qui” and “que” in French lies in their roles as <b>relative pronouns</b>.</p>
<p class="sec"><b>Qui:</b></p>
<p><b>Subject Pronoun</b>:&nbsp; It replaces the subject of the sentence.</p>
<p>Example: “Je <u>prends</u> le train. Le train <u>va</u> à Paris.” (I’m taking the train. The train is going to Paris.)</p>
<p>To avoid repeating “le train,” you can use the relative pronoun “qui”:</p>
<p>“Je <u>prends</u> le train qui <u>va</u> à Paris.” (<span class="red">I’m taking the train <b>which</b>&nbsp; is going to Paris</span>).</p>
<p><b>Que</b>:</p>
<p><b>Direct Object Pronoun</b>:&nbsp; It replaces the object of the sentence.</p>
<p>Example: “Le train <u>va</u> <u>en</u> <u>Normandie</u>. <u class="g">Je <u>prends</u> le train.”</u> (The train is going to <u>Normandie</u>. I’m taking the train.)</p>
<p>To create a single sentence, use the direct object pronoun “que”:</p>
<p>“Le train que <u class="b">je</u> <u>prends</u> <u>va</u> <u>en</u> <u>Normandie</u>.” (<span class="red">The train <b>that</b> I’m taking is going to <u>Normandie</u></span>).</p>
<p>Remember this simple tip:</p>
<p><b>Qui</b> is followed by the verb (subject + verb) <b>“Je <u>prends</u> le train <span class="red">qui <u>va</u></span> à Paris.”</b></p>
<p><b>Que</b> is followed by the subject and then the verb (subject + verb) <b>“Le train <span class="red">que <u class="b">je</u> <u>prends</u> <u>va</u></span> <u>en</u> <u>Normandie</u>.”</b></p>
<p><i class="caret"></i></p>
<p><b><u>C'est</u> <u>une</u> religion <span class="red">que</span> <u class="b">je</u> <u>connais</u> pas <u>mais</u> <span class="red">qui</span> <u>m'intéresse</u></b></p>`);

define('doc-area', `
:host{display:grid;grid-template-columns:21px 1fr 16px;grid-template-rows:minmax(0,1fr);min-height:0;background:linear-gradient(#cdd1d7,#b6b9be)}
.mid{display:flex;flex-direction:column;align-items:center;min-height:0;min-width:0;overflow:hidden}
.rule{align-self:stretch;display:flex;justify-content:center;background:#cdd1d7;position:relative;z-index:1}
.rule div{width:1012px}
`, `<v-ruler></v-ruler><div class="mid"><div class="rule"><div><h-ruler></h-ruler></div></div><doc-page></doc-page></div><v-scroll></v-scroll>`);

define('status-bar', `
:host{display:flex;align-items:center;height:22px;box-sizing:border-box;border-top:1px solid #8b9199;background:linear-gradient(#e3e5e9,#c9ccd1 60%,#b9bcc2);color:#333}
.c{height:20px;display:flex;align-items:center;gap:16px;border-right:1px solid #8f949c;padding:0 9px}
.c:first-of-type{padding-left:5px}
.r{margin-left:auto;display:flex;align-items:center;height:20px;border-left:1px solid #8f949c;padding:0 2px 0 4px}
.r>button{width:18px;height:18px}
.on{border:1px solid #c07a2d;border-radius:2px;background:#fbdf8a;margin-right:1px}
.pct{width:45px;text-align:center}
.r>.z{width:16px}
input{appearance:none;width:100px;height:16px;background:linear-gradient(#888,#888) center/100% 1px no-repeat}
input::-webkit-slider-thumb{appearance:none;width:9px;height:13px;background:#f7f8fa;border:1px solid #777;border-radius:1px 1px 4px 4px}
`, `<div class="c">Page: 1 of 1</div><div class="c">Words: 193</div><div class="c">${I.proof}<span>English (U.S.)</span></div>
<div class="r"><button class="on" aria-label="Print layout">${I.v1}</button><button aria-label="Full screen">${I.v2}</button><button aria-label="Web layout">${I.v3}</button><button aria-label="Outline">${I.v4}</button><button aria-label="Draft">${I.v5}</button><span class="pct">124%</span><button class="z" aria-label="Zoom out">${I.minus}</button><input type="range" aria-label="Zoom" min="0" max="100" value="53"><button class="z" aria-label="Zoom in">${I.plus}</button></div>`);

define('task-button', `
:host{display:flex;width:49px;height:39px}
button{width:100%;border-top:2px solid transparent;border-bottom:2px solid transparent;margin:0 4px;width:41px}
:host([open]) button{border-bottom-color:#4a9bd4}
:host([active]) button{margin:0 1px;width:47px;background:#f1f4e6;border-top-color:#f1f4e6}
`, el => `<button aria-label="${el.getAttribute('icon')}">${I[el.getAttribute('icon')]}</button>`);

define('task-bar', `
:host{display:flex;height:39px;align-items:center;color:#111;font-size:12px;background:linear-gradient(90deg,#dbe1c6 0,#d9dfc9 17%,#ddebc0 24%,#dcebbd 45%,#e9e2c4 53%,#ebdfc5 70%,#dfe5c6 80%,#d6dad0 87%,#d4d5d4 100%)}
.start{width:46px;height:39px;padding-right:4px}
.search{width:286px;height:39px;background:#fff;display:flex;align-items:center;padding:0 14px 0 11px;gap:12px;margin-right:2px}
input{flex:1;min-width:0;font-size:14px;outline:0}
input::placeholder{color:#333;opacity:1}
.tray{margin-left:auto;display:flex;align-items:center;height:39px}
.tray>button{width:24px;height:39px}
.tray>.wx{width:112px;font-size:14px;gap:9px;margin-right:16px;white-space:pre}
.two{line-height:17px;text-align:center;display:block}
.tray>.lang{width:36px}
.tray>.clock{width:68px}
.tray>.n{width:42px}
.tray>.cp{width:31px;margin-right:15px}
`, `<button class="start" aria-label="Start">${I.win}</button><label class="search">${I.search}<input type="text" placeholder="Type here to search" aria-label="Search">${I.cookie}</label>
<task-button icon="taskview"></task-button><task-button icon="firefox"></task-button><task-button icon="edge" open></task-button><task-button icon="dark" open></task-button><task-button icon="chrome"></task-button><task-button icon="folder" open></task-button><task-button icon="flower"></task-button><task-button icon="amp"></task-button><task-button icon="music" open></task-button><task-button icon="spotify" open></task-button><task-button icon="wordapp" open active></task-button><task-button icon="photo" open></task-button>
<div class="tray"><button class="wx">${I.cloud}<span>57°F  Cloudy</span></button><button aria-label="Hidden icons">${I.chev}</button><button aria-label="Volume">${I.speaker}</button><button aria-label="Camera">${I.meet}</button><button aria-label="Network">${I.net}</button><button aria-label="Dropbox">${I.dropbox}</button><button class="two lang">ENG<br>INTL</button><button class="two clock">1:01 AM<br>5/15/2024</button><button class="n" aria-label="Notifications">${I.notif}</button><button class="cp" aria-label="Copilot">${I.copilot}</button></div>`);

define('word-app', `
:host{display:flex;flex-direction:column;height:100vh}
doc-area{flex:1}
`, `<title-bar></title-bar><ribbon-tabs></ribbon-tabs><word-ribbon></word-ribbon><doc-area></doc-area><status-bar></status-bar><task-bar></task-bar>`);
</script>
</body>
</html>
